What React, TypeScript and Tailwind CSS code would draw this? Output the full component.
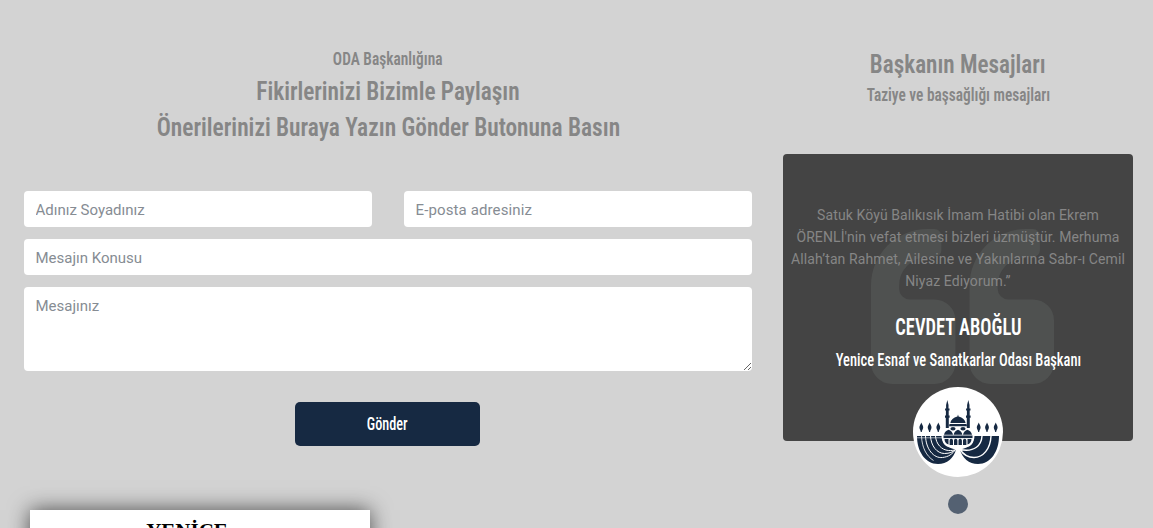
import type { ReactNode } from 'react';

const fieldClass =
    'block w-full rounded bg-white pr-3 pl-[11.5px] text-[15px] text-gray-700 outline-none placeholder:text-[#868c93]';

const messageLines = [
    'Satuk Köyü Balıkısık İmam Hatibi olan Ekrem',
    "ÖRENLİ'nin vefat etmesi bizleri üzmüştür. Merhuma",
    'Allah’tan Rahmet, Ailesine ve Yakınlarına Sabr-ı Cemil',
    'Niyaz Ediyorum.”',
];

function Condensed({
    className,
    children,
}: {
    className: string;
    children: ReactNode;
}) {
    return (
        <span
            className={`inline-block whitespace-nowrap [font-stretch:75%] ${className}`}
        >
            {children}
        </span>
    );
}

function QuoteMark() {
    return (
        <svg
            viewBox="64 128 1664 1408"
            preserveAspectRatio="none"
            className="absolute top-[75px] left-[88px] h-[155px] w-[183px] fill-[#4f5150]"
        >
            <path d="M832 960v384q0 80-56 136t-136 56h-384q-80 0-136-56t-56-136v-704q0-104 40.5-198.5t109.5-163.5 163.5-109.5 198.5-40.5h64q26 0 45 19t19 45v128q0 26-19 45t-45 19h-64q-106 0-181 75t-75 181v32q0 40 28 68t68 28h224q80 0 136 56t56 136zm896 0v384q0 80-56 136t-136 56h-384q-80 0-136-56t-56-136v-704q0-104 40.5-198.5t109.5-163.5 163.5-109.5 198.5-40.5h64q26 0 45 19t19 45v128q0 26-19 45t-45 19h-64q-106 0-181 75t-75 181v32q0 40 28 68t68 28h224q80 0 136 56t56 136z" />
        </svg>
    );
}

function Logo() {
    return (
        <svg viewBox="0 0 90 90" className="size-[90px]">
            <circle cx="45" cy="45" r="45" fill="#fff" />
            <g fill="#162942">
                {/* minarets */}
                {[34.3, 55.3].map((x) => (
                    <path
                        key={x}
                        transform={`translate(${x} 13)`}
                        d="M0 0l1.2 5v3.5h1v2h-.8v5h.9v2.2h-.8V28h-3V17.7h-.8v-2.2h.9v-5h-.8v-2h1V5z"
                    />
                ))}
                {/* flames */}
                {[8.3, 16.6, 25.3, 65.7, 74, 82.7].map((x) => (
                    <path
                        key={x}
                        transform={`translate(${x} 35.5)`}
                        d="M0 0c.6 2 2 3 1.900 5C1.800 7 .6 7.500.5 9.500h-1C-.6 7.500-1.800 7-1.900 5-2 3-.4 2 0 0z"
                    />
                ))}
                {/* main dome */}
                <path d="M45 27.5l.6 2c4 .8 6.600 3.600 7 6.500H37.400c.4-2.900 3-5.700 7-6.500z" />
                <path d="M36.500 37h17l.5 2.200h-18z" />
                {/* branches */}
                <path d="M4 49h24.500c0 7 5.500 12 14.500 13.500C41 71 34 77 25 77 12 77 4 64 4 49z" />
                <path d="M86 49H61.500c0 7-5.500 12-14.500 13.500C49 71 56 77 65 77c13 0 21-13 21-28z" />
            </g>
            {/* gaps between the branches */}
            <g stroke="#fff" fill="none" strokeWidth="1">
                <path d="M4 50.800h25" strokeWidth=".6" />
                <path d="M8.500 49c.5 12 5 20 12 24.500" strokeWidth=".8" />
                <path d="M12.500 49c.5 13 8 22.500 17 21.500 6-.6 10-3.500 13-8" />
                <path d="M17.500 49c.5 10 6.500 17.500 14 17.500 5 0 8.500-1.500 11-4" />
                <path d="M22.500 49c.5 8 6 14 13 14.500 3 .2 5.500-.2 7.500-1" />
                <path
                    d="M69 49c-.5 9-7 16.500-22 13.500M78 49c-.5 13-8 21.500-17 21.500-6 0-11-3.500-14-8"
                    strokeWidth="1.400"
                />
            </g>
            {/* side domes and base */}
            <g fill="#162942">
                <path
                    d="M29.500 47h31v6c-.5 4-3 6.500-6.500 6.800H36c-3.500-.3-6-2.800-6.500-6.800z"
                    fill="#fff"
                />
                <path d="M31 47.800c.5-2.800 2.300-4.200 4.600-5 2.200.8 3.900 2.200 4.400 5z" />
                <path d="M40.600 47.800c.5-2.800 2.200-4.200 4.400-5 2.200.8 3.900 2.200 4.400 5z" />
                <path d="M50 47.800c.5-2.800 2.200-4.200 4.400-5 2.300.8 4.100 2.200 4.600 5z" />
                <ellipse cx="40" cy="41.700" rx="2.600" ry="1.700" />
                <ellipse cx="50" cy="41.700" rx="2.600" ry="1.700" />
                <path d="M30.500 48.500h29v2.600h-29z" />
                <path d="M31.500 52h4v5.500c-2.500-.7-4-2.500-4-5.500zM36.600 58v-4.500a1.700 1.700 0 0 1 3.400 0V58zM41 58v-4.500a1.700 1.700 0 0 1 3.400 0V58zM45.500 58v-4.500a1.700 1.700 0 0 1 3.400 0V58zM50 58v-4.500a1.700 1.700 0 0 1 3.400 0V58zM54.500 52h4c0 3-1.500 4.800-4 5.500z" />
            </g>
        </svg>
    );
}

function ContactForm() {
    return (
        <section className="w-[728px] text-center">
            <h4 className="h-7 pt-px text-[19px] leading-7 font-semibold text-[#868686]">
                <Condensed className="scale-x-[0.81]">ODA Başkanlığına</Condensed>
            </h4>
            <h2 className="mt-px text-[26px] leading-9 font-semibold text-[#868686]">
                <Condensed className="scale-x-[0.896]">
                    Fikirlerinizi Bizimle Paylaşın
                </Condensed>
                <br />
                <Condensed className="scale-x-[0.9]">
                    Önerilerinizi Buraya Yazın Gönder Butonuna Basın
                </Condensed>
            </h2>
            <form className="mt-[46px]" onSubmit={(e) => e.preventDefault()}>
                <div className="grid grid-cols-2 gap-x-8 gap-y-3">
                    <input
                        type="text"
                        placeholder="Adınız Soyadınız"
                        className={`${fieldClass} h-9 pt-0.5`}
                    />
                    <input
                        type="email"
                        placeholder="E-posta adresiniz"
                        className={`${fieldClass} h-9 pt-0.5 tracking-[0.12px]`}
                    />
                    <input
                        type="text"
                        placeholder="Mesajın Konusu"
                        className={`${fieldClass} col-span-2 h-9 pt-0.5`}
                    />
                    <textarea
                        placeholder="Mesajınız"
                        className={`${fieldClass} col-span-2 h-[84px] resize pt-[7px] pb-1.5 leading-6`}
                    />
                </div>
                <button
                    type="submit"
                    className="mt-[31px] mr-px h-11 w-[185px] rounded-[5px] bg-[#162942] text-[19px] font-medium text-white"
                >
                    <Condensed className="scale-x-[0.75]">Gönder</Condensed>
                </button>
            </form>
        </section>
    );
}

function PresidentMessages() {
    return (
        <section className="w-[350px] pt-0.5 text-center">
            <h2 className="text-[26px] leading-9 font-semibold text-[#868686]">
                <Condensed className="scale-x-[0.89]">Başkanın Mesajları</Condensed>
            </h2>
            <h4 className="-mt-0.5 h-7 pt-px text-[19px] leading-7 font-semibold text-[#868686]">
                <Condensed className="scale-x-[0.808]">
                    Taziye ve başsağlığı mesajları
                </Condensed>
            </h4>
            <div className="relative mt-[46px] h-[287px] rounded bg-[#444] pt-[50px]">
                <QuoteMark />
                <div className="relative">
                    <p className="text-sm leading-[22px] tracking-[0.1px] whitespace-nowrap text-[#868686]">
                        {messageLines.map((line) => (
                            <span key={line} className="block">
                                {line}
                            </span>
                        ))}
                    </p>
                    <h3 className="mt-5 text-[23px] leading-8 font-semibold text-white">
                        <Condensed className="scale-x-[0.805]">CEVDET ABOĞLU</Condensed>
                    </h3>
                    <h5 className="-mx-4 text-lg leading-8 font-medium text-white">
                        <Condensed className="scale-x-[0.805]">
                            Yenice Esnaf ve Sanatkarlar Odası Başkanı
                        </Condensed>
                    </h5>
                </div>
                <div className="absolute top-[233px] left-[130px]">
                    <Logo />
                </div>
            </div>
            <div className="mx-auto mt-[53px] size-5 rounded-full bg-[#546172]" />
        </section>
    );
}

export default function App() {
    return (
        <div className="h-[528px] overflow-hidden bg-[#d3d3d3] pt-11 pr-5 pl-6 font-['Roboto',sans-serif]">
            <div className="flex h-[466px] justify-between">
                <ContactForm />
                <PresidentMessages />
            </div>
            <div className="ml-1.5 h-40 w-[340px] bg-white pt-[7px] pr-[26px] shadow-[0_0_20px_rgba(0,0,0,0.65)]">
                <p className="text-center font-['Liberation_Serif',serif] text-[21px] leading-7 font-bold text-black">
                    YENİCE
                </p>
            </div>
        </div>
    );
}
